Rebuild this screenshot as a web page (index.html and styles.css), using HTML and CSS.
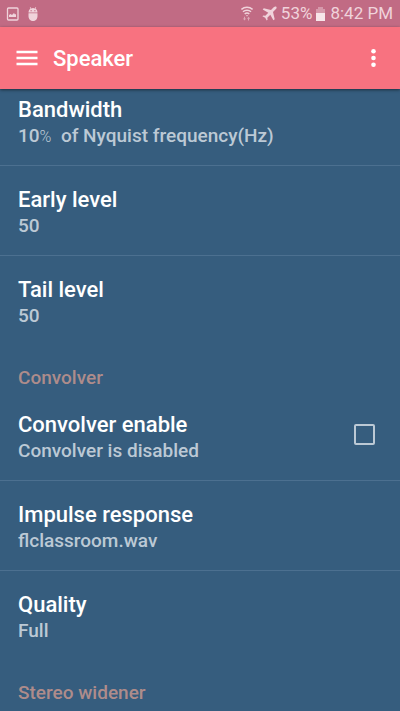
FILE: index.html
```html
<!DOCTYPE html>
<html lang="en">
<head>
<meta charset="utf-8">
<meta name="viewport" content="width=device-width, initial-scale=1">
<title>Speaker</title>
<link rel="stylesheet" href="styles.css">
</head>
<body>
<div class="status">
  <div class="status-group notices">
    <svg width="14" height="14" viewBox="0 0 14 14" aria-hidden="true"><rect x="1.500" y="1" width="10.500" height="12" rx="1" fill="none" stroke="currentColor" stroke-width="1.300"/><path d="M3 10V8l1.500-1L6 8l2-2 1 1.500 1-.5v3z" fill="currentColor"/></svg>
    <svg width="10" height="14" viewBox="0 0 10 14" aria-hidden="true"><path d="M.5 5.500C.5 3.500 1.400 2.300 2.500 1.700L1.800.4l.6-.3.8 1.300a5 5 0 0 1 3.600 0L7.600.1l.6.3-.7 1.300c1.100.6 2 1.800 2 3.800z" fill="currentColor"/><path d="M.5 6.300h9V9c0 3-2 5-4.500 5S.5 12 .5 9z" fill="currentColor"/><path d="M2.500 3.200h1.300v1H2.500zM6.200 3.200h1.300v1H6.200z" fill="#c16b84"/></svg>
  </div>
  <div class="status-group">
    <svg class="wifi" width="12" height="15" viewBox="0 0 12 15" fill="none" stroke="currentColor" aria-hidden="true"><path d="M.4 3.500a8.200 8.200 0 0 1 11.200 0M2 5.800a5.800 5.800 0 0 1 8 0M3.700 8a3.400 3.400 0 0 1 4.600 0" stroke-width="1.500"/><path d="M4.800 9.200h2.400L6 10.500z" fill="currentColor" stroke="none"/><path d="M3 10.800h1v1.700h1.100l-1.600 2-1.600-2H3zM8 14.500H7v-1.700H6l1.600-2 1.600 2H8z" fill="currentColor" stroke="none" opacity=".6"/></svg>
    <svg class="plane" width="15" height="15" viewBox="0 0 15 15" aria-hidden="true"><path d="M14.300.7c.6.700.3 1.700-.6 2.600L11 6l1.700 7.200-1.300 1.100L8.300 8.700 5.300 11.700l.3 2-.9.9-1.500-2.800L.4 10.300l.9-.9 2 .3 3-3L.7 3.600 1.800 2.300 9 4l2.700-2.700c.9-.9 1.900-1.200 2.600-.6z" fill="currentColor"/></svg>
    <span>53%</span>
    <svg class="battery" width="9" height="14" viewBox="0 0 9 14" aria-hidden="true"><path d="M2 0h5v2h2v5H0V2h2z" fill="currentColor" opacity=".45"/><path d="M0 6h9v8H0z" fill="#f7e6ea"/></svg>
    <span>8:42 PM</span>
  </div>
</div>
<header class="toolbar">
  <button class="icon-button" type="button" aria-label="Open menu"><svg width="22" height="16" viewBox="0 0 22 16" aria-hidden="true"><path d="M.5 2h21M.5 8h21M.5 14h21" stroke="currentColor" stroke-width="2.400"/></svg></button>
  <h1>Speaker</h1>
  <button class="icon-button" type="button" aria-label="More options"><svg width="6" height="20" viewBox="0 0 6 20" fill="currentColor" aria-hidden="true"><circle cx="2.500" cy="3.300" r="2.300"/><circle cx="2.500" cy="10" r="2.300"/><circle cx="2.500" cy="16.700" r="2.300"/></svg></button>
</header>
<main>
  <div class="settings">
    <section>
      <div class="row"><div><h3>Bandwidth</h3><p>10<span class="percent">%</span>&nbsp; of Nyquist frequency(Hz)</p></div></div>
      <div class="row"><div><h3>Early level</h3><p>50</p></div></div>
      <div class="row"><div><h3>Tail level</h3><p>50</p></div></div>
    </section>
    <section>
      <h2>Convolver</h2>
      <div class="row"><div><h3><label for="convolver">Convolver enable</label></h3><p>Convolver is disabled</p></div><input id="convolver" type="checkbox"></div>
      <div class="row"><div><h3>Impulse response</h3><p>flclassroom.wav</p></div></div>
      <div class="row"><div><h3>Quality</h3><p>Full</p></div></div>
    </section>
    <section>
      <h2>Stereo widener</h2>
    </section>
  </div>
</main>
</body>
</html>
```
FILE: styles.css
```css
* {
  box-sizing: border-box;
}

html,
body {
  height: 100%;
}

body {
  margin: 0;
  display: flex;
  flex-direction: column;
  overflow: hidden;
  background: #365d7e;
  color: #fff;
  font-family: Roboto, "Liberation Sans", sans-serif;
}

h1,
h2,
h3,
p {
  margin: 0;
  font-weight: 500;
}

svg {
  display: block;
}

.status {
  flex: none;
  height: 27px;
  padding: 0 7px 0 6px;
  display: flex;
  align-items: center;
  justify-content: space-between;
  background: #c16b84;
  color: #f0d3db;
  font-size: 17px;
  line-height: 27px;
}

.status-group {
  display: flex;
  align-items: center;
}

.notices {
  gap: 8px;
}

.wifi {
  margin-right: 9px;
}

.plane {
  margin-right: 4px;
}

.battery {
  margin: 0 5px 0 4px;
}

.toolbar {
  flex: none;
  height: 62px;
  padding: 0 15px;
  display: flex;
  align-items: center;
  background: #f87280;
  box-shadow: 0 1px 3px rgba(0, 0, 0, 0.5);
  z-index: 1;
}

.toolbar h1 {
  flex: 1;
  margin-left: 15px;
  padding-top: 2px;
  font-size: 22px;
  line-height: 28px;
}

.icon-button {
  padding: 0;
  border: 0;
  min-width: 23px;
  height: 48px;
  display: flex;
  align-items: center;
  justify-content: center;
  background: none;
  color: inherit;
}

main {
  flex: 1;
  min-height: 0;
  overflow: hidden;
}

/* The list is scrolled slightly beneath the toolbar. */
.settings {
  margin-top: -13px;
}

.row {
  padding: 20px 25px 16px 18px;
  display: flex;
  align-items: center;
  justify-content: space-between;
  border-bottom: 1px solid #4c7090;
}

.row:last-child {
  border-bottom-color: transparent;
}

h3 {
  font-size: 22px;
  line-height: 27px;
}

p {
  color: #bcc9d5;
  font-size: 19px;
  line-height: 26px;
}

.percent {
  font-size: 16px;
  font-weight: 300;
  line-height: 1;
}

h2 {
  padding: 19px 18px 0;
  color: #ae8c8b;
  font-size: 19px;
  line-height: 26px;
}

input[type="checkbox"] {
  appearance: none;
  width: 21px;
  height: 21px;
  margin: 0 0 6px;
  border: 2px solid #bcc9d5;
  border-radius: 2px;
}
```
